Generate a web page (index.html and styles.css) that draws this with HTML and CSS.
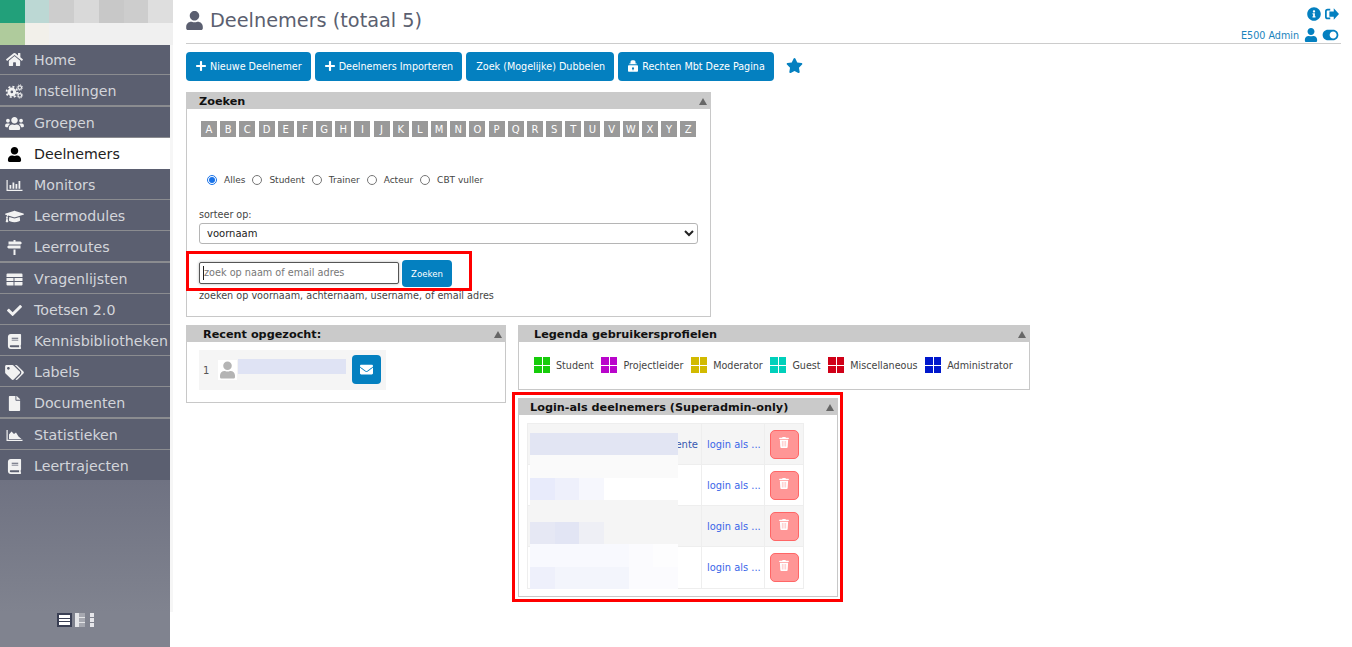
FILE: index.html
```html
<!DOCTYPE html>
<html lang="nl">
<head>
<meta charset="utf-8">
<title>Deelnemers</title>
<link rel="stylesheet" href="styles.css">
</head>
<body>
<svg class="defs" aria-hidden="true">
  <symbol id="i-user" viewBox="0 0 448 512"><path d="M224 256c70.7 0 128-57.3 128-128S294.7 0 224 0 96 57.3 96 128s57.3 128 128 128zm89.6 32h-16.7c-22.2 10.2-46.9 16-72.9 16s-50.6-5.8-72.9-16h-16.7C60.2 288 0 348.2 0 422.4V464c0 26.5 21.5 48 48 48h352c26.5 0 48-21.5 48-48v-41.6c0-74.2-60.2-134.4-134.4-134.4z"/></symbol>
  <symbol id="i-home" viewBox="0 0 576 512"><path d="M280.37 148.26L96 300.11V464a16 16 0 0 0 16 16l112.06-.29a16 16 0 0 0 15.92-16V368a16 16 0 0 1 16-16h64a16 16 0 0 1 16 16v95.64a16 16 0 0 0 16 16.05L464 480a16 16 0 0 0 16-16V300L295.67 148.26a12.19 12.19 0 0 0-15.3 0zM571.6 251.47L488 182.56V44.05a12 12 0 0 0-12-12h-56a12 12 0 0 0-12 12v72.61L318.47 43a48 48 0 0 0-61 0L4.34 251.47a12 12 0 0 0-1.6 16.9l25.5 31A12 12 0 0 0 45.15 301l235.22-193.74a12.19 12.19 0 0 1 15.3 0L530.9 301a12 12 0 0 0 16.9-1.6l25.5-31a12 12 0 0 0-1.7-16.93z"/></symbol>
  <symbol id="i-cogs" viewBox="-0.5 -0.5 21 17"><circle cx="7" cy="8.500" r="3.2" fill="none" stroke="currentColor" stroke-width="3.4"/><circle cx="7" cy="8.500" r="6" fill="none" stroke="currentColor" stroke-width="2" stroke-dasharray="2.3 2.4"/><circle cx="16" cy="3.6" r="2" fill="none" stroke="currentColor" stroke-width="1.3"/><circle cx="16" cy="3.6" r="3.2" fill="none" stroke="currentColor" stroke-width="1" stroke-dasharray="1.2 1.3"/><circle cx="16" cy="12.4" r="2" fill="none" stroke="currentColor" stroke-width="1.3"/><circle cx="16" cy="12.4" r="3.2" fill="none" stroke="currentColor" stroke-width="1" stroke-dasharray="1.2 1.3"/></symbol>
  <symbol id="i-users" viewBox="0 0 640 512"><path d="M96 224c35.3 0 64-28.7 64-64s-28.7-64-64-64-64 28.7-64 64 28.7 64 64 64zm448 0c35.3 0 64-28.7 64-64s-28.7-64-64-64-64 28.7-64 64 28.7 64 64 64zm32 32h-64c-17.6 0-33.5 7.1-45.1 18.6 40.3 22.1 68.9 62 75.1 109.4h66c17.7 0 32-14.3 32-32v-32c0-35.3-28.7-64-64-64zm-256 0c61.9 0 112-50.1 112-112S381.9 32 320 32 208 82.1 208 144s50.1 112 112 112zm76.8 32h-8.3c-20.8 10-43.9 16-68.5 16s-47.6-6-68.5-16h-8.3C179.6 288 128 339.6 128 403.2V432c0 26.5 21.5 48 48 48h288c26.5 0 48-21.5 48-48v-28.8c0-63.6-51.6-115.2-115.2-115.2zm-223.7-13.4C161.5 263.1 145.6 256 128 256H64c-35.3 0-64 28.7-64 64v32c0 17.7 14.3 32 32 32h65.9c6.3-47.4 34.9-87.3 75.2-109.4z"/></symbol>
  <symbol id="i-bars" viewBox="-1.5 -2 19 15"><path d="M0 0h1.200v9.800H16V11H0zM3 5h1.800v3.800H3zM6 2.500h1.800v6.300H6zM9 4h1.800v4.800H9zM12 1h1.800v7.800H12z"/></symbol>
  <symbol id="i-cap" viewBox="0 0 640 512"><path d="M622.34 153.2L343.4 67.5c-15.2-4.67-31.6-4.67-46.79 0L17.66 153.2c-23.54 7.23-23.54 38.36 0 45.59l48.63 14.94c-10.67 13.19-17.23 29.28-17.88 46.9C38.78 266.15 32 276.11 32 288c0 10.78 5.68 19.85 13.86 25.65L20.33 428.53C18.11 438.52 25.71 448 35.94 448h56.11c10.24 0 17.84-9.48 15.62-19.47L82.14 313.65C90.32 307.85 96 298.78 96 288c0-11.57-6.47-21.25-15.66-26.87.76-15.02 8.44-28.3 20.69-36.72L296.6 284.5c9.06 2.78 26.44 6.25 46.79 0l278.95-85.7c23.55-7.24 23.55-38.36 0-45.6zM352.79 315.09c-28.53 8.76-52.84 3.92-65.59 0l-145.02-44.55L128 384c0 35.35 85.96 64 192 64s192-28.65 192-64l-14.18-113.47-145.03 44.56z"/></symbol>
  <symbol id="i-signs" viewBox="-1.5 0 19 15"><path d="M7 0h2v1.500h5L15.500 3 14 4.500H2v-3h5zM2 5.500h12v3H2L.5 7zM7 9.500h2V15H7z"/></symbol>
  <symbol id="i-table" viewBox="-1.5 -1.5 19 15"><path d="M0 1A1 1 0 0 1 1 0h14a1 1 0 0 1 1 1v2.500H0zM0 4.500h7v3H0zM8 4.500h8v3H8zM0 8.500h7V12H1a1 1 0 0 1-1-1zM8 8.500h8V11a1 1 0 0 1-1 1H8z"/></symbol>
  <symbol id="i-check" viewBox="0 0 512 512"><path d="M173.898 439.404l-166.4-166.4c-9.997-9.997-9.997-26.206 0-36.204l36.203-36.204c9.997-9.998 26.207-9.998 36.204 0L192 312.69 432.095 72.596c9.997-9.997 26.207-9.997 36.204 0l36.203 36.204c9.997 9.997 9.997 26.206 0 36.204l-294.4 294.401c-9.998 9.997-26.207 9.997-36.204-.001z"/></symbol>
  <symbol id="i-book" viewBox="0 0 448 512"><path d="M448 360V24c0-13.3-10.7-24-24-24H96C43 0 0 43 0 96v320c0 53 43 96 96 96h328c13.3 0 24-10.7 24-24v-16c0-7.5-3.5-14.3-8.9-18.7-4.2-15.4-4.2-59.3 0-74.7 5.4-4.3 8.9-11.1 8.9-18.6zM128 134c0-3.3 2.7-6 6-6h212c3.3 0 6 2.7 6 6v20c0 3.3-2.700 6-6 6H134c-3.3 0-6-2.700-6-6v-20zm0 64c0-3.3 2.7-6 6-6h212c3.3 0 6 2.7 6 6v20c0 3.3-2.700 6-6 6H134c-3.3 0-6-2.700-6-6v-20zm253.4 250H96c-17.7 0-32-14.300-32-32 0-17.600 14.400-32 32-32h285.400c-1.900 17.100-1.900 46.900 0 64z"/></symbol>
  <symbol id="i-tags" viewBox="0 0 640 512"><path d="M497.941 225.941L286.059 14.059A48 48 0 0 0 252.118 0H48C21.49 0 0 21.49 0 48v204.118a48 48 0 0 0 14.059 33.941l211.882 211.882c18.744 18.745 49.136 18.746 67.882 0l204.118-204.118c18.745-18.745 18.745-49.137 0-67.882zM112 160c-26.51 0-48-21.49-48-48s21.49-48 48-48 48 21.49 48 48-21.49 48-48 48zm513.941 133.823L421.823 497.941c-18.745 18.745-49.137 18.745-67.882 0l-.36-.36L527.64 323.522c16.999-16.999 26.36-39.6 26.36-63.64s-9.362-46.641-26.36-63.64L331.397 0h48.721a48 48 0 0 1 33.941 14.059l211.882 211.882c18.745 18.745 18.745 49.137 0 67.882z"/></symbol>
  <symbol id="i-file" viewBox="0 0 384 512"><path d="M224 136V0H24C10.7 0 0 10.700 0 24v464c0 13.300 10.700 24 24 24h336c13.300 0 24-10.700 24-24V160H248c-13.200 0-24-10.800-24-24zm160-14.100v6.100H256V0h6.100c6.400 0 12.500 2.500 17 7l97.900 98c4.500 4.500 7 10.600 7 16.900z"/></symbol>
  <symbol id="i-area" viewBox="-1.5 -2 19 15"><path d="M0 0h1.200v9.800H16V11H0zM2.500 9V4.500L5 1.500l2.500 2.500 2-1.500 2.500 4 3 2.500z"/></symbol>
  <symbol id="i-plus" viewBox="0 0 448 512"><path d="M416 208H272V64c0-17.670-14.330-32-32-32h-32c-17.670 0-32 14.330-32 32v144H32c-17.670 0-32 14.330-32 32v32c0 17.670 14.330 32 32 32h144v144c0 17.670 14.330 32 32 32h32c17.670 0 32-14.330 32-32V304h144c17.670 0 32-14.330 32-32v-32c0-17.670-14.330-32-32-32z"/></symbol>
  <symbol id="i-lock" viewBox="0 0 12 14"><path d="M3 4V2a2 2 0 0 1 2-2h2a2 2 0 0 1 2 2v2h1.500v1h-9V4zM1 6h10a1 1 0 0 1 1 1v6a1 1 0 0 1-1 1H1a1 1 0 0 1-1-1V7a1 1 0 0 1 1-1zm5 2.500a1.300 1.300 0 0 0-.6 2.450V12h1.200v-1.050A1.300 1.300 0 0 0 6 8.500z"/></symbol>
  <symbol id="i-star" viewBox="0 0 576 512"><path d="M259.300 17.800L194 150.200 47.900 171.500c-26.200 3.800-36.700 36.100-17.700 54.600l105.700 103-25 145.500c-4.500 26.300 23.200 46 46.400 33.700L288 439.600l130.700 68.700c23.200 12.200 50.900-7.400 46.400-33.700l-25-145.500 105.700-103c19-18.500 8.500-50.800-17.700-54.600L382 150.200 316.700 17.800c-11.700-23.600-45.600-23.900-57.400 0z"/></symbol>
  <symbol id="i-info" viewBox="0 0 512 512"><path d="M256 8C119.043 8 8 119.083 8 256c0 136.997 111.043 248 248 248s248-111.003 248-248C504 119.083 392.957 8 256 8zm0 110c23.196 0 42 18.804 42 42s-18.804 42-42 42-42-18.804-42-42 18.804-42 42-42zm56 254c0 6.627-5.373 12-12 12h-88c-6.627 0-12-5.373-12-12v-24c0-6.627 5.373-12 12-12h12v-64h-12c-6.627 0-12-5.373-12-12v-24c0-6.627 5.373-12 12-12h64c6.627 0 12 5.373 12 12v100h12c6.627 0 12 5.373 12 12v24z"/></symbol>
  <symbol id="i-exit" viewBox="0 0 16 14"><path d="M6 1v2H3a1 1 0 0 0-1 1v6a1 1 0 0 0 1 1h3v2H3a3 3 0 0 1-3-3V4a3 3 0 0 1 3-3zM10 .5L16 7l-6 6.500V10H5V4h5z"/></symbol>
  <symbol id="i-toggle" viewBox="0 0 576 512"><path d="M384 64H192C86 64 0 150 0 256s86 192 192 192h192c106 0 192-86 192-192S490 64 384 64zm0 320c-70.800 0-128-57.300-128-128 0-70.800 57.300-128 128-128 70.800 0 128 57.300 128 128 0 70.800-57.300 128-128 128z"/></symbol>
  <symbol id="i-mail" viewBox="0 0 512 512"><path d="M502.300 190.800c3.900-3.100 9.700-.2 9.700 4.700V400c0 26.500-21.500 48-48 48H48c-26.500 0-48-21.500-48-48V195.600c0-5 5.700-7.800 9.700-4.700 22.400 17.400 52.100 39.500 154.100 113.600 21.100 15.400 56.700 47.800 92.200 47.600 35.700.3 72-32.800 92.300-47.600 102-74.100 131.600-96.300 154-113.700zM256 320c23.200.4 56.600-29.200 73.400-41.400 132.700-96.300 142.800-104.700 173.400-128.700 5.800-4.500 9.200-11.500 9.200-18.900v-19c0-26.500-21.500-48-48-48H48C21.500 64 0 85.500 0 112v19c0 7.400 3.400 14.300 9.200 18.900 30.600 23.900 40.700 32.400 173.400 128.700 16.800 12.200 50.200 41.800 73.400 41.400z"/></symbol>
  <symbol id="i-trash" viewBox="0 0 448 512"><path d="M432 32H312l-9.400-18.700A24 24 0 0 0 281.100 0H166.800a23.720 23.720 0 0 0-21.400 13.300L136 32H16A16 16 0 0 0 0 48v32a16 16 0 0 0 16 16h416a16 16 0 0 0 16-16V48a16 16 0 0 0-16-16zM53.200 467a48 48 0 0 0 47.900 45h245.800a48 48 0 0 0 47.900-45L416 128H32z"/><path fill="#ffc4c4" d="M125 190h40v250h-40zM204 190h40v250h-40zM283 190h40v250h-40z"/></symbol>
</svg>

<div class="app">
  <aside class="sidebar">
    <div class="logo">
      <i class="px px-a"></i><i class="px px-b"></i><i class="px px-c"></i><i class="px px-d"></i><i class="px px-e"></i><i class="px px-c"></i><i class="px px-f"></i>
      <i class="px px-g"></i><i class="px px-h"></i><i class="px px-i"></i><i class="px px-i"></i><i class="px px-i"></i><i class="px px-i"></i><i class="px px-i"></i>
    </div>
    <nav class="menu">
      <a class="item first"><svg class="ico"><use href="#i-home"/></svg>Home</a>
      <a class="item thick"><svg class="ico"><use href="#i-cogs"/></svg>Instellingen</a>
      <a class="item"><svg class="ico"><use href="#i-users"/></svg>Groepen</a>
      <a class="item active"><svg class="ico"><use href="#i-user"/></svg>Deelnemers</a>
      <a class="item"><svg class="ico"><use href="#i-bars"/></svg>Monitors</a>
      <a class="item"><svg class="ico"><use href="#i-cap"/></svg>Leermodules</a>
      <a class="item thick"><svg class="ico"><use href="#i-signs"/></svg>Leerroutes</a>
      <a class="item"><svg class="ico"><use href="#i-table"/></svg>Vragenlijsten</a>
      <a class="item"><svg class="ico"><use href="#i-check"/></svg>Toetsen 2.0</a>
      <a class="item"><svg class="ico"><use href="#i-book"/></svg>Kennisbibliotheken</a>
      <a class="item"><svg class="ico"><use href="#i-tags"/></svg>Labels</a>
      <a class="item thick"><svg class="ico"><use href="#i-file"/></svg>Documenten</a>
      <a class="item"><svg class="ico"><use href="#i-area"/></svg>Statistieken</a>
      <a class="item last"><svg class="ico"><use href="#i-book"/></svg>Leertrajecten</a>
    </nav>
    <div class="view-switch">
      <span class="view view-on"><i></i><i></i><i></i></span>
      <span class="view view-mid"><i></i><i></i><i></i></span>
      <span class="view view-min"><i></i><i></i><i></i></span>
    </div>
  </aside>

  <main class="main">
    <header class="topbar">
      <h1 class="title"><svg class="title-ico"><use href="#i-user"/></svg>Deelnemers (totaal 5)</h1>
      <div class="account">
        <div class="account-row">
          <svg class="acc-ico"><use href="#i-info"/></svg>
          <svg class="acc-ico exit"><use href="#i-exit"/></svg>
        </div>
        <div class="account-row">
          <span class="acc-name">E500 Admin</span>
          <svg class="acc-ico"><use href="#i-user"/></svg>
          <svg class="acc-ico toggle"><use href="#i-toggle"/></svg>
        </div>
      </div>
    </header>

    <div class="actions">
      <a class="btn"><svg class="btn-ico"><use href="#i-plus"/></svg>Nieuwe Deelnemer</a>
      <a class="btn"><svg class="btn-ico"><use href="#i-plus"/></svg>Deelnemers Importeren</a>
      <a class="btn">Zoek (Mogelijke) Dubbelen</a>
      <a class="btn"><svg class="btn-ico lock"><use href="#i-lock"/></svg>Rechten Mbt Deze Pagina</a>
      <svg class="star"><use href="#i-star"/></svg>
    </div>

    <section class="panel panel-search">
      <h2 class="panel-head head-search">Zoeken<span class="arrow"></span></h2>
      <div class="search-body">
        <div class="letters">
          <a>A</a><a>B</a><a>C</a><a>D</a><a>E</a><a>F</a><a>G</a><a>H</a><a>I</a><a>J</a><a>K</a><a>L</a><a>M</a><a>N</a><a>O</a><a>P</a><a>Q</a><a>R</a><a>S</a><a>T</a><a>U</a><a>V</a><a>W</a><a>X</a><a>Y</a><a>Z</a>
        </div>
        <div class="radios">
          <label><input type="radio" name="rol" checked>Alles</label>
          <label><input type="radio" name="rol">Student</label>
          <label><input type="radio" name="rol">Trainer</label>
          <label><input type="radio" name="rol">Acteur</label>
          <label><input type="radio" name="rol">CBT vuller</label>
        </div>
        <label class="sort-label" for="sort">sorteer op:</label>
        <select id="sort" class="sort"><option>voornaam</option></select>
        <div class="search-row">
          <span class="input-wrap"><input class="search-input" type="text" placeholder="zoek op naam of email adres"><i class="caret"></i></span>
          <a class="btn btn-search">Zoeken</a>
          <span class="mark mark-search"></span>
        </div>
        <p class="hint">zoeken op voornaam, achternaam, username, of email adres</p>
      </div>
    </section>

    <div class="lower">
      <section class="panel panel-recent">
        <h2 class="panel-head head-recent">Recent opgezocht:<span class="arrow"></span></h2>
        <div class="recent-body">
          <div class="recent-row">
            <span class="recent-num">1</span>
            <span class="avatar"><svg class="avatar-ico"><use href="#i-user"/></svg></span>
            <span class="recent-blur"></span>
            <a class="mail-btn"><svg class="mail-ico"><use href="#i-mail"/></svg></a>
          </div>
        </div>
      </section>

      <div class="right-col">
        <section class="panel panel-legend">
          <h2 class="panel-head head-legend">Legenda gebruikersprofielen<span class="arrow"></span></h2>
          <div class="legend-body">
            <span class="leg"><i class="sq sq-green"></i>Student</span>
            <span class="leg"><i class="sq sq-purple"></i>Projectleider</span>
            <span class="leg"><i class="sq sq-yellow"></i>Moderator</span>
            <span class="leg"><i class="sq sq-teal"></i>Guest</span>
            <span class="leg"><i class="sq sq-red"></i>Miscellaneous</span>
            <span class="leg"><i class="sq sq-blue"></i>Administrator</span>
          </div>
        </section>

        <section class="panel panel-login">
          <span class="mark mark-login"></span>
          <h2 class="panel-head head-login">Login-als deelnemers (Superadmin-only)<span class="arrow"></span></h2>
          <div class="login-body">
            <div class="login-table">
              <div class="lrow alt"><div class="lname">ente</div><div class="llink"><a>login als ...</a></div><div class="ldel"><a class="del"><svg class="del-ico"><use href="#i-trash"/></svg></a></div></div>
              <div class="lrow"><div class="lname"></div><div class="llink"><a>login als ...</a></div><div class="ldel"><a class="del"><svg class="del-ico"><use href="#i-trash"/></svg></a></div></div>
              <div class="lrow alt"><div class="lname"></div><div class="llink"><a>login als ...</a></div><div class="ldel"><a class="del"><svg class="del-ico"><use href="#i-trash"/></svg></a></div></div>
              <div class="lrow"><div class="lname"></div><div class="llink"><a>login als ...</a></div><div class="ldel"><a class="del"><svg class="del-ico"><use href="#i-trash"/></svg></a></div></div>
              <div class="redact">
                <i class="r r1 w6"></i><i class="r r1b w6"></i>
                <i class="r r2a"></i><i class="r r2b"></i><i class="r r2c"></i><i class="r r2d"></i>
                <i class="r r3 w6"></i>
                <i class="r r4a"></i><i class="r r4b"></i><i class="r r4c"></i><i class="r r4d"></i>
                <i class="r r5a"></i><i class="r r5b"></i><i class="r r5c"></i>
                <i class="r r6a"></i><i class="r r6b"></i><i class="r r6c"></i>
              </div>
            </div>
          </div>
        </section>
      </div>
    </div>
  </main>
</div>
</body>
</html>
```

FILE: styles.css
```css
* { box-sizing: border-box; }
html, body { margin: 0; height: 100%; overflow: hidden; background: #fff; }
body { font-family: "DejaVu Sans", Verdana, sans-serif; font-size: 10px; color: #444; }
a { text-decoration: none; }
.defs { display: none; }

.app { display: flex; height: 647px; }

/* Sidebar */
.sidebar { width: 170px; flex: none; display: flex; flex-direction: column; background: linear-gradient(#6f7282 480px, #80838f 612px); position: relative; }
.sidebar::after { content: ""; position: absolute; left: 170px; top: 45px; width: 3px; height: 567px; background: #f6f6f6; }
.logo { height: 45px; width: 173px; display: grid; grid-template-columns: repeat(7, 1fr); grid-template-rows: 23px 22px; background: #fff; }
.px { display: block; }
.px-a { background: #22a07a; }
.px-b { background: #bcd8d4; }
.px-c { background: #cdcdcd; }
.px-d { background: #d9d9d9; }
.px-e { background: #c8c8c8; }
.px-f { background: #dedede; }
.px-g { background: #afcb9c; }
.px-h { background: #f2f0ea; }
.px-i { background: #f0f0f0; }
.menu { display: flex; flex-direction: column; }
.item { height: 31px; display: flex; align-items: center; padding: 2px 0 0 5px; background: #5b5f70; color: #d3d5da; font-size: 14.2px; border-bottom: 1px solid #8b8c90; white-space: nowrap; overflow: hidden; }
.item.first { height: 30px; padding-top: 0; }
.item.thick { height: 32px; border-bottom-width: 2px; }
.item.active { background: #fff; color: #222; border-bottom-color: #fff; }
.item.last { border-bottom: 0; height: 30px; }
.ico { width: 19px; height: 15px; margin-right: 10px; flex: none; fill: #f2f2f2; color: #f2f2f2; }
.item.active .ico { fill: #000; }
.view-switch { position: absolute; left: 57px; top: 613px; display: flex; align-items: center; gap: 3px; }
.view { display: flex; flex-direction: column; gap: 1px; padding: 2px; height: 14px; }
.view i { flex: 1; display: block; background: #e6e6ea; }
.view-on { width: 15px; background: #3a3f54; }
.view-on i { background: #fff; }
.view-mid { width: 10px; padding: 0; background: #e4e5e8; }
.view-mid i { margin-left: 4px; background: #a6a8b0; }
.view-min { width: 4px; padding: 0; margin-left: 2px; }

/* Main */
.main { flex: 1; min-width: 0; padding: 0 11px 0 16px; }
.topbar { height: 44px; border-bottom: 1px solid #ccc; display: flex; justify-content: space-between; }
.title { margin: 0; padding-top: 9px; font-size: 19.3px; line-height: 23px; font-weight: 400; color: #5b5f70; display: flex; align-items: flex-start; }
.title-ico { width: 17px; height: 19px; margin-right: 7px; margin-top: 2px; fill: #5b5f70; }
.account { display: flex; flex-direction: column; align-items: flex-end; padding: 7px 2px 0 0; gap: 7px; }
.account-row { display: flex; align-items: center; gap: 4px; height: 14px; color: #0480c0; }
.acc-ico { width: 14px; height: 14px; fill: #0480c0; }
.acc-ico.exit { width: 14px; }
.acc-ico.toggle { width: 17px; }
.acc-name { font-size: 9.6px; margin-right: 1px; color: #1a84bd; }

.actions { display: flex; align-items: center; gap: 4px; margin-top: 7px; height: 30px; }
.btn { height: 29px; display: inline-flex; align-items: center; padding: 0 9px 0 10px; background: #0480c0; color: #fff; border-radius: 4px; font-size: 9.6px; white-space: nowrap; }
.btn-ico { width: 10px; height: 12px; margin-right: 4px; fill: #fff; }
.btn-ico.lock { width: 10px; height: 12px; margin-right: 4px; }
.star { width: 17px; height: 15px; fill: #0480c0; margin: -2px 0 0 8px; }

/* Panels */
.panel { border: 1px solid #c8c8c8; border-top: 0; background: #fff; position: relative; }
.panel-head { margin: 0 -1px; height: 17px; line-height: 19px; background: #cacaca; color: #111; font-size: 11.25px; font-weight: 700; position: relative; }
.arrow { position: absolute; right: 4px; top: 6px; width: 0; height: 0; border-left: 4px solid transparent; border-right: 4px solid transparent; border-bottom: 7px solid #666; }
.head-search { padding-left: 13px; }
.head-recent { padding-left: 17px; }
.head-legend { padding-left: 16px; }
.head-login { padding-left: 12px; }

.panel-search { width: 525px; height: 225px; margin-top: 11px; }
.search-body { padding: 12px 12px 0; }
.letters { display: flex; gap: 3.18px; padding-left: 2px; }
.letters a { width: 16px; height: 16px; background: #999; color: #fff; font-size: 10px; line-height: 17px; text-align: center; }
.radios { display: flex; align-items: center; margin-top: 35px; padding-left: 8px; height: 16px; font-size: 9px; }
.radios label { display: inline-flex; align-items: center; margin-right: 7px; color: #444; }
.radios input { margin: 0 7px 0 0; width: 10px; height: 10px; accent-color: #1a73e8; }
.sort-label { display: block; margin-top: 21px; font-size: 9.6px; line-height: 12px; color: #444; }
.sort { display: block; width: 499px; height: 21px; margin-top: 2px; padding-left: 3px; font: 10px "DejaVu Sans", sans-serif; color: #222; background: #fff; border: 1px solid #b5b5b5; border-radius: 3px; }
.search-row { display: flex; align-items: center; gap: 3px; margin-top: 16px; position: relative; }
.input-wrap { position: relative; display: block; margin-bottom: 2px; }
.search-input { display: block; width: 200px; height: 22px; padding: 0 4px; border: 1px solid #555; border-radius: 2px; font: 9.7px "DejaVu Sans", sans-serif; box-shadow: 0 0 3px rgba(0,0,0,.3); outline: 0; }
.search-input::placeholder { color: #777; opacity: 1; }
.caret { position: absolute; left: 4px; top: 4px; width: 1px; height: 14px; background: #222; }
.btn-search { width: 50px; height: 27px; padding: 0; justify-content: center; font-size: 8.6px; }
.mark { position: absolute; border: 3px solid #f00; pointer-events: none; }
.mark-search { left: -13px; top: -9px; width: 286px; height: 40px; }
.hint { margin: 3px 0 0; font-size: 9.66px; line-height: 12px; color: #444; }

.lower { display: flex; gap: 12px; margin-top: 8px; align-items: flex-start; }
.panel-recent { width: 320px; height: 78px; }
.recent-body { padding: 8px 12px; }
.recent-row { display: flex; align-items: center; width: 187px; height: 40px; background: #f5f5f5; position: relative; }
.recent-num { width: 19px; padding-left: 4px; color: #555; }
.avatar { width: 19px; height: 20px; background: #fff; display: flex; justify-content: center; align-items: center; }
.avatar-ico { width: 15px; height: 18px; fill: #b4b4b4; }
.recent-blur { width: 108px; height: 15px; margin: -8px 6px 0 1px; background: #dfe3f4; }
.mail-btn { width: 29px; height: 29px; display: flex; align-items: center; justify-content: center; background: #0480c0; border-radius: 4px; margin-top: -2px; }
.mail-ico { width: 13px; height: 13px; fill: #fff; }

.right-col { display: flex; flex-direction: column; gap: 8px; }
.panel-legend { width: 512px; height: 65px; }
.legend-body { display: flex; align-items: center; height: 47px; padding: 0 0 1px 15px; gap: 7.7px; }
.leg { display: inline-flex; align-items: center; white-space: nowrap; font-size: 9.6px; color: #444; }
.sq { width: 16px; height: 16px; margin-right: 6px; display: block; background-image: linear-gradient(#fff, #fff), linear-gradient(#fff, #fff); background-size: 1px 100%, 100% 1px; background-position: center, center; background-repeat: no-repeat; }
.sq-green { background-color: #16cc0a; }
.sq-purple { background-color: #b905cb; }
.sq-yellow { background-color: #d2ba00; }
.sq-teal { background-color: #00d0bb; }
.sq-red { background-color: #d00018; }
.sq-blue { background-color: #0018cc; }

.panel-login { width: 320px; height: 199px; }
.mark-login { left: -7px; top: -6px; width: 331px; height: 210px; }
.login-body { padding: 8px 8px; }
.login-table { width: 277px; border: 1px solid #eee; position: relative; }
.lrow { display: flex; height: 41px; background: #fff; border-bottom: 1px solid #eee; }
.lrow:nth-child(4) { border-bottom: 0; }
.lrow.alt { background: #f5f5f5; }
.lname { width: 174px; display: flex; align-items: center; justify-content: flex-end; padding-right: 3px; color: #3558b0; border-right: 1px solid #eee; font-size: 10px; }
.llink { width: 63px; display: flex; align-items: center; padding-left: 5px; border-right: 1px solid #eee; font-size: 9.9px; white-space: nowrap; }
.llink a { color: #3a66e8; }
.ldel { flex: 1; display: flex; align-items: center; justify-content: center; }
.del { width: 29px; height: 29px; display: flex; align-items: flex-start; justify-content: center; padding-top: 6px; background: #ff9696; border: 1px solid #f66; border-radius: 5px; }
.del-ico { width: 10px; height: 11px; fill: #fff; }
.redact { position: absolute; left: 2px; top: 9px; width: 148px; height: 155px; }
.r { position: absolute; display: block; }
.w6 { left: 0; width: 148px; }
.r1 { top: 0; height: 22px; background: #e2e5f3; }
.r1b { top: 22px; height: 23px; background: #fafafa; }
.r2a { top: 45px; left: 0; width: 25px; height: 22px; background: #e8ebfb; }
.r2b { top: 45px; left: 25px; width: 24px; height: 22px; background: #eef0fb; }
.r2c { top: 45px; left: 49px; width: 25px; height: 22px; background: #f6f7fd; }
.r2d { top: 45px; left: 74px; width: 74px; height: 22px; background: #fff; }
.r3 { top: 67px; height: 22px; background: #f5f5f5; }
.r4a { top: 89px; left: 0; width: 25px; height: 22px; background: #e6e8f4; }
.r4b { top: 89px; left: 25px; width: 24px; height: 22px; background: #e2e5f4; }
.r4c { top: 89px; left: 49px; width: 25px; height: 22px; background: #eeeff5; }
.r4d { top: 89px; left: 74px; width: 74px; height: 22px; background: #f5f5f5; }
.r5a { top: 111px; left: 0; width: 99px; height: 23px; background: #f8f9fe; }
.r5b { top: 111px; left: 99px; width: 24px; height: 23px; background: #fbfbfe; }
.r5c { top: 111px; left: 123px; width: 25px; height: 23px; background: #fdfdfe; }
.r6a { top: 134px; left: 0; width: 25px; height: 22px; background: #eef0fb; }
.r6b { top: 134px; left: 25px; width: 74px; height: 22px; background: #f3f5fc; }
.r6c { top: 134px; left: 99px; width: 49px; height: 22px; background: #fbfbfe; }
```
